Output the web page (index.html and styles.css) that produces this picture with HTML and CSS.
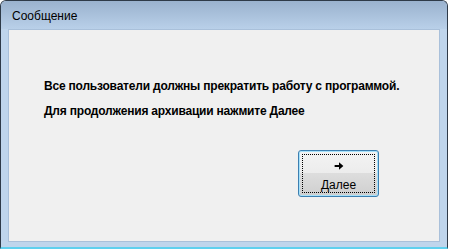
FILE: index.html
```html
<!DOCTYPE html>
<html lang="ru">
<head>
    <meta charset="UTF-8">
    <title>Сообщение</title>
    <link rel="stylesheet" href="styles.css">
</head>
<body>
    <div class="window">
        <div class="titlebar">Сообщение</div>
        <div class="client">
            <div class="message">
                <p>Все пользователи должны прекратить работу с программой.</p>
                <p>Для продолжения архивации нажмите Далее</p>
            </div>
            <div class="actions">
                <button class="next-btn">
                    <span class="focus-rect">
                        <svg class="arrow" width="12" height="11" viewBox="0 0 12 11">
                            <path d="M0 4h6V0.5l6 5-6 5V7H0z" fill="#000"/>
                        </svg>
                        <span class="btn-label">Далее</span>
                    </span>
                </button>
            </div>
        </div>
    </div>
</body>
</html>
```
FILE: styles.css
```css
* { margin: 0; padding: 0; box-sizing: border-box; }
body { background: #ffffff; font-family: 'Liberation Sans', Arial, sans-serif; }
.window { width: 448px; height: 249px; display: flex; flex-direction: column; border: 1px solid #2e3a48; border-bottom: 2px solid #5fd0ee; border-radius: 6px 6px 0 0; background: #bfd5ec; padding: 0 7px 5px 7px; }
.titlebar { height: 28px; margin: 0 -7px; padding: 8px 0 0 11px; font-size: 12px; color: #000; background: linear-gradient(#9ab2ce, #b9d0e9); border-radius: 5px 5px 0 0; }
.client { flex: 1; background: #f0f0f0; border: 1px solid #a9c0da; display: flex; flex-direction: column; }
.message { padding: 49px 0 0 35px; font-size: 12px; font-weight: bold; letter-spacing: -0.2px; color: #000; display: flex; flex-direction: column; gap: 11px; }
.actions { display: flex; justify-content: flex-end; padding: 32px 60px 0 0; }
.next-btn { width: 81px; height: 47px; border: 1px solid #3c7fb1; border-radius: 3px; box-shadow: inset 0 0 0 1px #a6e1fa; background: linear-gradient(#f3f3f3 0, #ececec 50%, #dddddd 50%, #cfcfcf 100%); padding: 3px; font-family: 'Liberation Sans', Arial, sans-serif; font-size: 12px; color: #000; }
.focus-rect { display: flex; flex-direction: column; align-items: center; height: 100%; border: 1px dotted #000; padding-top: 7px; }
.arrow { display: block; }
.btn-label { margin-top: 8px; }
```
